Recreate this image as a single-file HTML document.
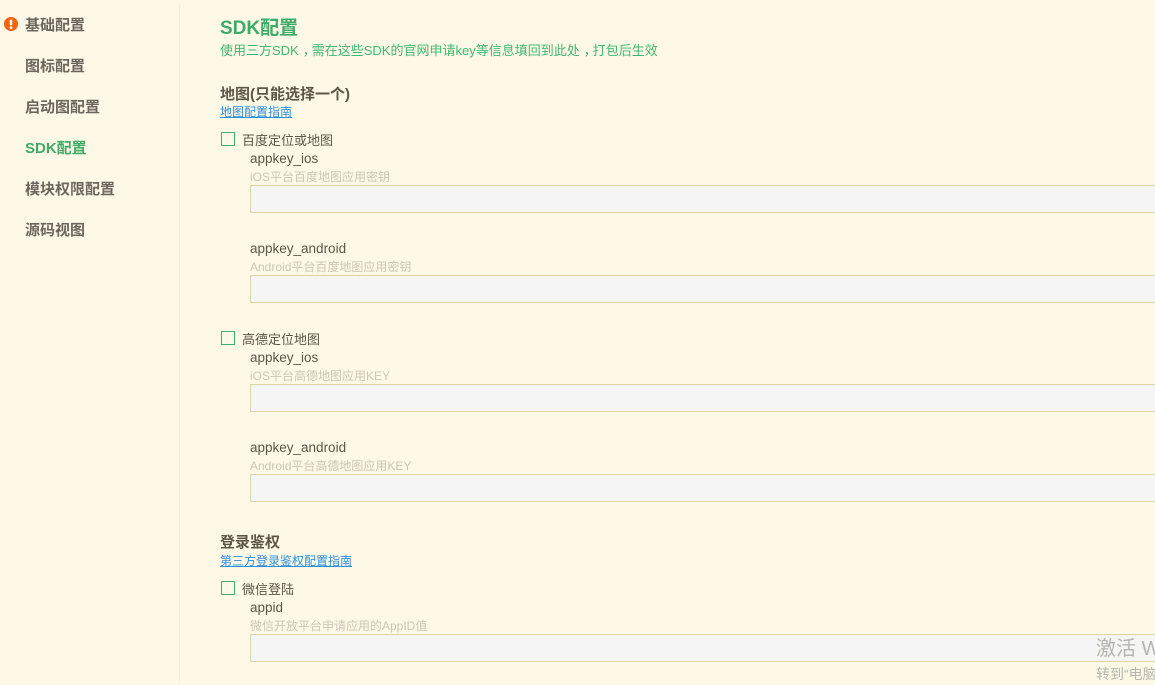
<!DOCTYPE html>
<html lang="zh-CN">
<head>
<meta charset="utf-8">
<style>
html,body{margin:0;padding:0;width:1155px;height:685px;overflow:hidden;background:#fef9e7;}
body{position:relative;font-family:"Liberation Sans","Noto Sans CJK SC",sans-serif;color:#5c5647;}
.t{position:absolute;white-space:nowrap;margin:0;}
.nav{left:25px;font-size:15px;line-height:20px;font-weight:700;color:#6b675c;}
.h{left:220px;font-size:15px;line-height:20px;font-weight:700;color:#5c5647;}
.a{left:220px;font-size:12px;line-height:16px;color:#2b8fe0;text-decoration:underline;}
.c{position:absolute;left:221px;width:12px;height:12px;border:1px solid #42ae6c;box-sizing:content-box;}
.cl{left:242px;font-size:13px;line-height:18px;color:#5c5647;}
.l{left:250px;font-size:13.5px;line-height:18px;color:#5c5647;}
.d{left:250px;font-size:12px;line-height:16px;color:#cbc7b6;}
.i{position:absolute;left:250px;width:904px;height:26px;background:#f5f5f5;border:1px solid #e0d4a9;border-right:0;}
.w{position:absolute;left:1096px;width:59px;overflow:hidden;color:#b5b5b0;white-space:nowrap;}
.m{position:relative;left:4px;}
</style>
</head>
<body>
<div style="position:absolute;left:179px;top:4px;width:1px;height:681px;background:#f5eeda"></div>

<svg style="position:absolute;left:4px;top:17px" width="14" height="14" viewBox="0 0 14 14"><circle cx="7" cy="7" r="7" fill="#f7620e"/><rect x="5.7" y="2.5" width="2.6" height="6" rx="1.2" fill="#fef9e7"/><circle cx="7" cy="10.6" r="1.4" fill="#fef9e7"/></svg>

<div class="t nav" style="top:16px">基础配置</div>
<div class="t nav" style="top:57px">图标配置</div>
<div class="t nav" style="top:98px">启动图配置</div>
<div class="t nav" style="top:139px;color:#3fab69">SDK配置</div>
<div class="t nav" style="top:180px">模块权限配置</div>
<div class="t nav" style="top:221px">源码视图</div>

<div class="t" style="left:220px;top:17px;font-size:19px;line-height:24px;font-weight:700;color:#3fab69">SDK配置</div>
<div class="t" style="left:220px;top:42px;font-size:13px;line-height:17px;color:#3fb871">使用三方SDK<span class="m">，</span>需在这些SDK的官网申请key等信息填回到此处<span class="m">，</span>打包后生效</div>

<div class="t h" style="top:85px">地图(只能选择一个)</div>
<div class="t a" style="top:104px">地图配置指南</div>

<div class="c" style="top:132px"></div>
<div class="t cl" style="top:132px">百度定位或地图</div>
<div class="t l" style="top:150px">appkey_ios</div>
<div class="t d" style="top:169px">iOS平台百度地图应用密钥</div>
<div class="i" style="top:185px"></div>
<div class="t l" style="top:240px">appkey_android</div>
<div class="t d" style="top:259px">Android平台百度地图应用密钥</div>
<div class="i" style="top:275px"></div>

<div class="c" style="top:331px"></div>
<div class="t cl" style="top:331px">高德定位地图</div>
<div class="t l" style="top:349px">appkey_ios</div>
<div class="t d" style="top:368px">iOS平台高德地图应用KEY</div>
<div class="i" style="top:384px"></div>
<div class="t l" style="top:439px">appkey_android</div>
<div class="t d" style="top:458px">Android平台高德地图应用KEY</div>
<div class="i" style="top:474px"></div>

<div class="t h" style="top:533px">登录鉴权</div>
<div class="t a" style="top:553px">第三方登录鉴权配置指南</div>

<div class="c" style="top:581px"></div>
<div class="t cl" style="top:581px">微信登陆</div>
<div class="t l" style="top:599px">appid</div>
<div class="t d" style="top:618px">微信开放平台申请应用的AppID值</div>
<div class="i" style="top:634px"></div>

<div class="w" style="top:636px;font-size:20px;line-height:26px;height:26px">激活 Windows</div>
<div class="w" style="top:665px;font-size:14px;line-height:18px;height:18px">转到“电脑设置”以激活 Windows。</div>
</body>
</html>
